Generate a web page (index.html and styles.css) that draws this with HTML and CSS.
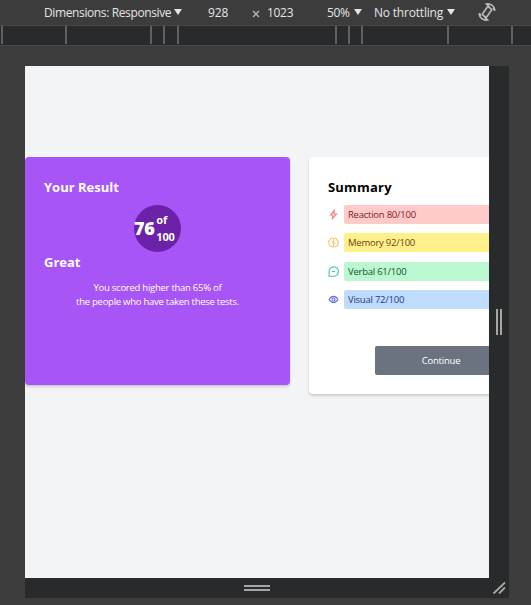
FILE: index.html
```
<!DOCTYPE html>
<html lang="en">
<head>
<meta charset="utf-8">
<title>Results summary</title>
<link rel="stylesheet" href="styles.css">
</head>
<body>
<header class="toolbar">
  <span class="label dims">Dimensions: Responsive</span><i class="arrow"></i>
  <span class="label width">928</span>
  <svg class="times" viewBox="0 0 8 8"><path d="M1 1l6 6M7 1L1 7"/></svg>
  <span class="label height">1023</span>
  <span class="label zoom">50%</span><i class="arrow"></i>
  <span class="label throttle">No throttling</span><i class="arrow"></i>
  <svg class="rotate" viewBox="0 0 20 20"><rect x="7.4" y="5" width="5.200" height="10" rx="1" transform="rotate(35 10 10)"/><path d="M12.500 4.800L9.500 2c4.500-.6 8 2.400 8.500 6.500M15.800 6.500L18 8.800M7.500 15.200l3 2.800c-4.500.6-8-2.400-8.500-6.500M4.200 13.500L2 11.200"/></svg>
</header>
<div class="ruler"><i></i><i></i><i></i><i></i><i></i><i></i><i></i><i></i><i></i><i></i></div>
<main class="stage">
  <div class="device">
    <div class="screen">
      <section class="card result">
        <h2>Your Result</h2>
        <div class="score"><b>76</b><span>of<br>100</span></div>
        <h2>Great</h2>
        <p><span class="line one">You scored higher than 65% of</span><span class="line two">the people who have taken these tests.</span></p>
      </section>
      <section class="card summary">
        <h2>Summary</h2>
        <div class="row reaction"><svg viewBox="0 0 20 20"><path d="M11.500 2.500L4.500 11h4.500l-1 6.500L15.500 9H11z"/></svg><span class="bar"><span>Reaction 80/100</span></span></div>
        <div class="row memory"><svg viewBox="0 0 20 20"><path d="M10 2v16M10 3C6 0 4 3 4 5 0 7 1 10 2 11c-1 4 2 6 4 6 2 2 4 1 4 0M10 3c4-3 6 0 6 2 4 2 3 5 2 6 1 4-2 6-4 6-2 2-4 1-4 0M6.500 8l3 1.500M13.500 12l-3-1.500"/></svg><span class="bar"><span>Memory 92/100</span></span></div>
        <div class="row verbal"><svg viewBox="0 0 20 20"><path d="M2 18.500V10a8.500 8.500 0 1 1 8.500 8.500zM7 10h6"/></svg><span class="bar"><span>Verbal 61/100</span></span></div>
        <div class="row visual"><svg viewBox="0 0 20 20"><path d="M2 10C6 2.500 14 2.500 18 10 14 17.500 6 17.500 2 10z"/><circle cx="10" cy="10" r="2.800"/></svg><span class="bar"><span>Visual 72/100</span></span></div>
        <button><span>Continue</span></button>
      </section>
    </div>
    <div class="handle side"><i></i><i></i></div>
    <div class="handle bottom"><i></i><i></i></div>
    <div class="handle corner"><svg viewBox="0 0 20 20"><path d="M4.500 15.500L16 4.500M10 15.500l6-6"/></svg></div>
  </div>
</main>
</body>
</html>
```
FILE: styles.css
```
* { box-sizing: border-box; }
body {
  margin: 0;
  width: 531px;
  height: 605px;
  overflow: hidden;
  background: #3c3c3c;
  font-family: "Open Sans", "Noto Sans", sans-serif;
}
.toolbar {
  display: flex;
  align-items: center;
  height: 25px;
  padding-left: 44px;
  color: #e3e5e8;
  font-size: 12px;
}
.toolbar > * { flex: none; }
.label { white-space: nowrap; line-height: 25px; letter-spacing: -0.38px; }
.dims { width: 130px; }
.width { width: 20px; margin-left: 26px; letter-spacing: -0.1px; }
.height { width: 60px; margin-left: 7px; letter-spacing: -0.3px; }
.zoom { width: 27px; }
.throttle { width: 73px; margin-left: 12px; letter-spacing: -0.2px; }
.arrow {
  width: 8px;
  height: 6px;
  margin-bottom: 1px;
  background: #e3e5e8;
  clip-path: polygon(0 0, 100% 0, 50% 100%);
}
.times { width: 8px; height: 8px; margin: 3px 0 0 24px; stroke: #b4b6b8; stroke-width: 1.3; }
.rotate { width: 20px; height: 20px; margin: -1px 0 0 22px; fill: none; stroke: #b9bbbd; stroke-width: 1.6; }
.ruler {
  display: grid;
  grid-template-columns: 64px 85px 13px 14px 158px 13px 13px 86px 64px 20px;
  height: 21px;
  padding-left: 1px;
  background: #292a2b;
  border-top: 1px solid #484848;
  border-bottom: 1px solid #484848;
}
.ruler i { width: 2px; height: 18px; background: #606162; }
.stage { padding: 20px 0 0 25px; }
.device { display: grid; grid-template-columns: 464px 20px; grid-template-rows: 512px 20px; width: 484px; }
.screen {
  display: flex;
  align-items: flex-start;
  gap: 19px;
  overflow: hidden;
  padding-top: 91.3px;
  background: #f3f4f6;
}
.card {
  flex: 0 0 265px;
  padding: 18.700px 19px;
  border-radius: 4px;
  box-shadow: 0 2px 3px rgba(0, 0, 0, .12), 0 1px 2px rgba(0, 0, 0, .08);
}
.result { height: 227.400px; background: #a855f7; color: #fff; }
.summary { height: 236.500px; background: #fff; color: #000; }
h2 { margin: 0; font-size: 13px; line-height: 22px; font-weight: 700; }
.summary h2 { letter-spacing: 0.2px; }
.score {
  display: flex;
  align-items: center;
  gap: 2px;
  width: 47px;
  height: 47px;
  margin: 7px auto 0;
  border-radius: 50%;
  background: #6b21a8;
  font-weight: 700;
}
.score b { font-size: 18px; letter-spacing: -0.4px; }
.score span { font-size: 11px; line-height: 17px; letter-spacing: -0.2px; }
.score + h2 { margin-top: -1px; }
p { margin: 8px 0 0; font-size: 9.500px; line-height: 14px; text-align: center; letter-spacing: -0.26px; }
.line { display: block; white-space: nowrap; }
.row { display: flex; align-items: center; height: 19px; margin-bottom: 9.300px; font-size: 9.500px; letter-spacing: -0.24px; }
h2 + .row { margin-top: 7px; }
.row svg { flex: none; width: 11px; height: 11px; margin-right: 5px; fill: none; stroke: currentColor; stroke-width: 2; }
.bar { flex: 1; height: 19px; padding-left: 4px; border-radius: 2px; line-height: 20px; }
.reaction { color: #f87f7f; }
.reaction .bar { background: #fecaca; color: #7f1d1d; }
.memory { color: #fbc470; }
.memory .bar { background: #fef08a; color: #713f12; }
.verbal { color: #3ec9a8; }
.verbal .bar { background: #bbf7d0; color: #14532d; }
.visual { color: #6a70e0; }
.visual .bar { background: #bfdbfe; color: #1e3a8a; }
button {
  display: block;
  width: 132px;
  height: 29px;
  margin: 37px 0 0 47px;
  padding: 0;
  border: 0;
  border-radius: 2px;
  background: #6b7280;
  color: #fff;
  font: 9.500px/29px "Open Sans", "Noto Sans", sans-serif;
  letter-spacing: -0.2px;
}
.handle { display: flex; align-items: center; justify-content: center; gap: 2px; background: #292a2b; }
.handle i { background: #a6a6a6; }
.side i { width: 2px; height: 26px; }
.bottom { flex-direction: column; }
.bottom i { width: 26px; height: 2px; }
.corner svg { width: 20px; height: 20px; stroke: #a6a6a6; stroke-width: 1.8; }
```
